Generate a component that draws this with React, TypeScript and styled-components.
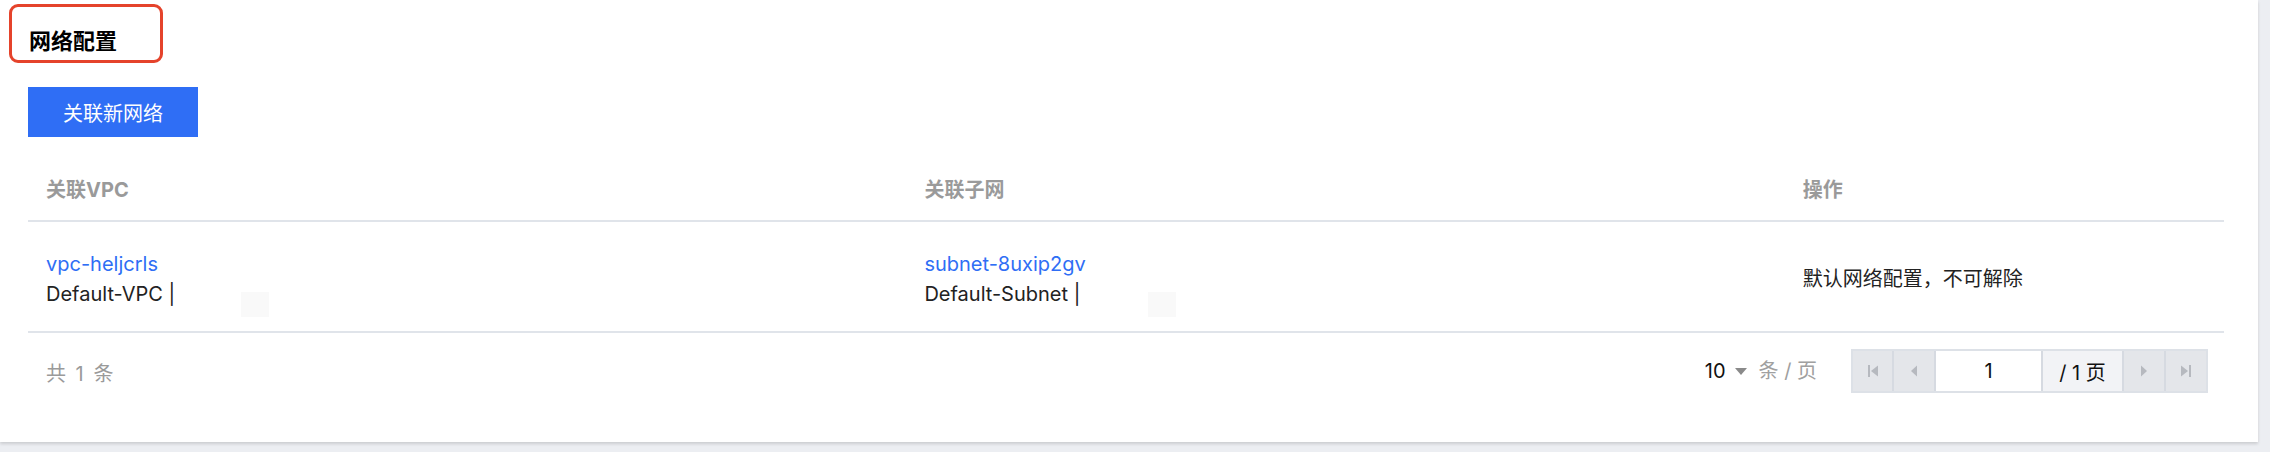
import React from "react";
import styled, { createGlobalStyle } from "styled-components";

const Global = createGlobalStyle`
  html, body { margin: 0; padding: 0; }
  body {
    background: #eceef2;
    font-family: Inter, "Noto Sans CJK SC", sans-serif;
    color: #222;
  }
`;

const Page = styled.div`
  width: 2270px;
  height: 452px;
  overflow: hidden;
`;

const Card = styled.section`
  width: 2258px;
  height: 442px;
  box-sizing: border-box;
  background: #fff;
  box-shadow: 0 2px 3px rgba(0, 0, 0, 0.14);
  padding: 4px 34px 0 28px;
  display: flex;
  flex-direction: column;
`;

const TitleMark = styled.div`
  width: 154px;
  height: 59px;
  box-sizing: border-box;
  margin-left: -19px;
  border: 3px solid #e5432b;
  border-radius: 9px;
  padding: 19px 0 0 17px;
`;

const Title = styled.h2`
  margin: 0;
  font-size: 22px;
  line-height: 30px;
  font-weight: 700;
  color: #000;
`;

const PrimaryButton = styled.button`
  margin-top: 24px;
  width: 170px;
  height: 50px;
  border: none;
  background: #2f6ef5;
  color: #fff;
  font-family: inherit;
  font-size: 20px;
  padding: 0;
  cursor: pointer;
`;

const Row = styled.div<{ $head?: boolean }>`
  display: grid;
  grid-template-columns: 2fr 2fr 1fr;
  border-bottom: 2px solid #e0e4ea;
  height: ${(p) => (p.$head ? "85px" : "111px")};
  box-sizing: border-box;
  align-items: ${(p) => (p.$head ? "end" : "center")};
  padding-bottom: ${(p) => (p.$head ? "16px" : "0")};
`;

const HeadCell = styled.div`
  padding-left: 18px;
  font-size: 20px;
  line-height: 28px;
  font-weight: 700;
  color: #9a9a9a;
`;

const Cell = styled.div`
  padding-left: 18px;
  font-size: 20px;
  line-height: 30px;
  color: #222;
  padding-top: 4px;
`;

const Link = styled.a`
  display: block;
  color: #2f6ef5;
  text-decoration: none;
`;

const SubText = styled.div`
  display: flex;
  align-items: flex-start;
  height: 30px;
`;

const Ghost = styled.span<{ $gap: number }>`
  display: inline-block;
  flex: none;
  width: 28px;
  height: 25px;
  margin-left: ${(p) => p.$gap}px;
  margin-top: 13px;
  background: #f9f9f9;
`;

const Footer = styled.div`
  display: flex;
  align-items: center;
  padding: 16px 16px 0 18px;
`;

const Total = styled.div`
  font-size: 20px;
  line-height: 28px;
  color: #9a9a9a;
  margin-top: 6px;
  word-spacing: 4px;
`;

const Spacer = styled.div`
  flex: 1;
`;

const PageSize = styled.div`
  display: flex;
  align-items: center;
  font-size: 20px;
  line-height: 28px;
  margin-right: 34px;
`;

const SizeValue = styled.span`
  color: #111;
`;

const Caret = styled.span`
  display: inline-block;
  margin: 0 12px 0 9px;
  width: 0;
  height: 0;
  border-left: 6px solid transparent;
  border-right: 6px solid transparent;
  border-top: 7px solid #8a8a8a;
`;

const SizeUnit = styled.span`
  color: #a0a0a0;
`;

const Pager = styled.div`
  display: flex;
  height: 44px;
  box-sizing: border-box;
  border: 2px solid #dde1e7;
  background: #e4e6ea;
`;

const PagerBtn = styled.button<{ $w: number }>`
  width: ${(p) => p.$w}px;
  height: 100%;
  border: none;
  border-right: 2px solid #d6dae1;
  background: #e4e6ea;
  padding: 0;
  display: flex;
  align-items: center;
  justify-content: center;
  &:last-child {
    border-right: none;
  }
`;

const PageInput = styled.div`
  width: 107px;
  height: 100%;
  box-sizing: border-box;
  background: #fff;
  border-right: 2px solid #d6dae1;
  display: flex;
  align-items: center;
  justify-content: center;
  font-size: 20px;
  color: #111;
`;

const PageTotal = styled.div`
  width: 81px;
  height: 100%;
  box-sizing: border-box;
  background: #f2f3f6;
  border-right: 2px solid #d6dae1;
  display: flex;
  align-items: center;
  justify-content: center;
  font-size: 20px;
  color: #111;
`;

const Icon = ({ kind }: { kind: "first" | "prev" | "next" | "last" }) => {
  const c = "#b6b9bf";
  if (kind === "first")
    return (
      <svg width="12" height="14" viewBox="0 0 12 14">
        <rect x="1" y="1" width="2" height="12" fill={c} />
        <path d="M11 1.5 L4 7 L11 12.5 Z" fill={c} />
      </svg>
    );
  if (kind === "last")
    return (
      <svg width="12" height="14" viewBox="0 0 12 14">
        <rect x="9" y="1" width="2" height="12" fill={c} />
        <path d="M1 1.5 L8 7 L1 12.5 Z" fill={c} />
      </svg>
    );
  if (kind === "prev")
    return (
      <svg width="8" height="14" viewBox="0 0 8 14">
        <path d="M7 1.5 L1 7 L7 12.5 Z" fill={c} />
      </svg>
    );
  return (
    <svg width="8" height="14" viewBox="0 0 8 14">
      <path d="M1 1.5 L7 7 L1 12.5 Z" fill={c} />
    </svg>
  );
};

export default function App() {
  return (
    <Page>
      <Global />
      <Card>
        <TitleMark>
          <Title>网络配置</Title>
        </TitleMark>
        <div>
          <PrimaryButton>关联新网络</PrimaryButton>
        </div>
        <Row $head>
          <HeadCell>关联VPC</HeadCell>
          <HeadCell>关联子网</HeadCell>
          <HeadCell>操作</HeadCell>
        </Row>
        <Row>
          <Cell>
            <Link href="#">vpc-heljcrls</Link>
            <SubText>
              Default-VPC |<Ghost $gap={66} />
            </SubText>
          </Cell>
          <Cell>
            <Link href="#">subnet-8uxip2gv</Link>
            <SubText>
              Default-Subnet |<Ghost $gap={68} />
            </SubText>
          </Cell>
          <Cell>默认网络配置，不可解除</Cell>
        </Row>
        <Footer>
          <Total>共 1 条</Total>
          <Spacer />
          <PageSize>
            <SizeValue>10</SizeValue>
            <Caret />
            <SizeUnit>条 / 页</SizeUnit>
          </PageSize>
          <Pager>
            <PagerBtn $w={41}>
              <Icon kind="first" />
            </PagerBtn>
            <PagerBtn $w={42}>
              <Icon kind="prev" />
            </PagerBtn>
            <PageInput>1</PageInput>
            <PageTotal>/ 1 页</PageTotal>
            <PagerBtn $w={42}>
              <Icon kind="next" />
            </PagerBtn>
            <PagerBtn $w={40}>
              <Icon kind="last" />
            </PagerBtn>
          </Pager>
        </Footer>
      </Card>
    </Page>
  );
}
